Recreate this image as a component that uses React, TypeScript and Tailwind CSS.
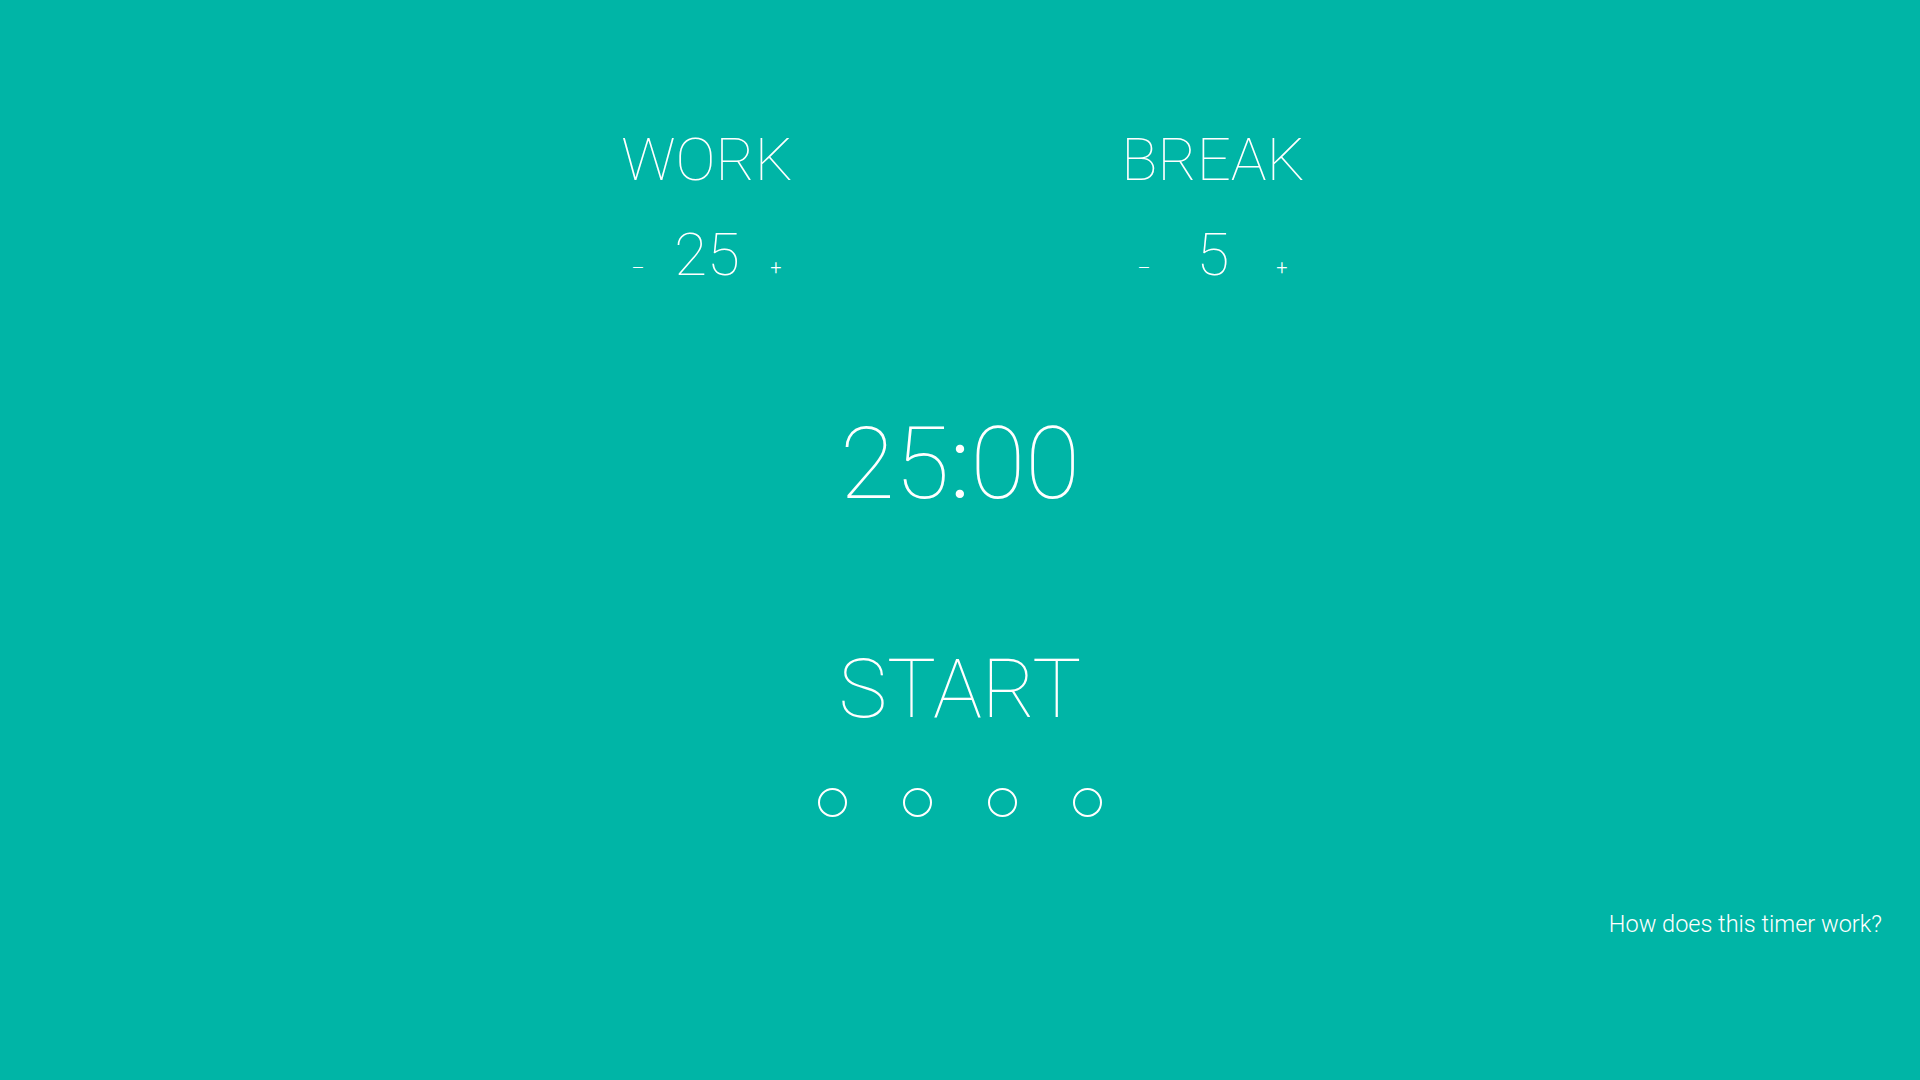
import React from "react";

export default function App() {
  const roboto = { fontFamily: "Roboto, 'Noto Sans', sans-serif" };
  const Col = ({ label, value }: { label: string; value: string }) => (
    <div className="flex flex-col items-center">
      <div className="text-[60px] leading-none font-thin">{label}</div>
      <div className="mt-[35px] flex items-baseline justify-center gap-[12px]">
        <button className="text-[20px] leading-none font-light w-[14px] text-center">–</button>
        <span className="w-[100px] text-center text-[60px] leading-none font-thin">{value}</span>
        <button className="text-[20px] leading-none font-light w-[14px] text-center -translate-y-[1px]">+</button>
      </div>
    </div>
  );
  return (
    <div className="min-h-screen w-full bg-[#00b5a6] text-white flex flex-col" style={roboto}>
      <div className="flex flex-col items-center pt-[130px]">
        <div className="grid grid-cols-[300px_300px] gap-[206px]">
          <Col label="WORK" value="25" />
          <Col label="BREAK" value="5" />
        </div>
        <div className="mt-[129px] text-[100px] leading-none font-thin">
          25<span className="font-light">:</span>00
        </div>
        <button className="mt-[134px] text-[82px] leading-none font-thin">START</button>
        <div className="mt-[58px] flex gap-[56px]">
          <div className="w-[29px] h-[29px] rounded-full border-2 border-white" />
          <div className="w-[29px] h-[29px] rounded-full border-2 border-white" />
          <div className="w-[29px] h-[29px] rounded-full border-2 border-white" />
          <div className="w-[29px] h-[29px] rounded-full border-2 border-white" />
        </div>
      </div>
      <div className="mt-[96px] flex justify-end pr-[38px]">
        <span className="text-[23.5px] leading-none font-light">How does this timer work?</span>
      </div>
    </div>
  );
}
